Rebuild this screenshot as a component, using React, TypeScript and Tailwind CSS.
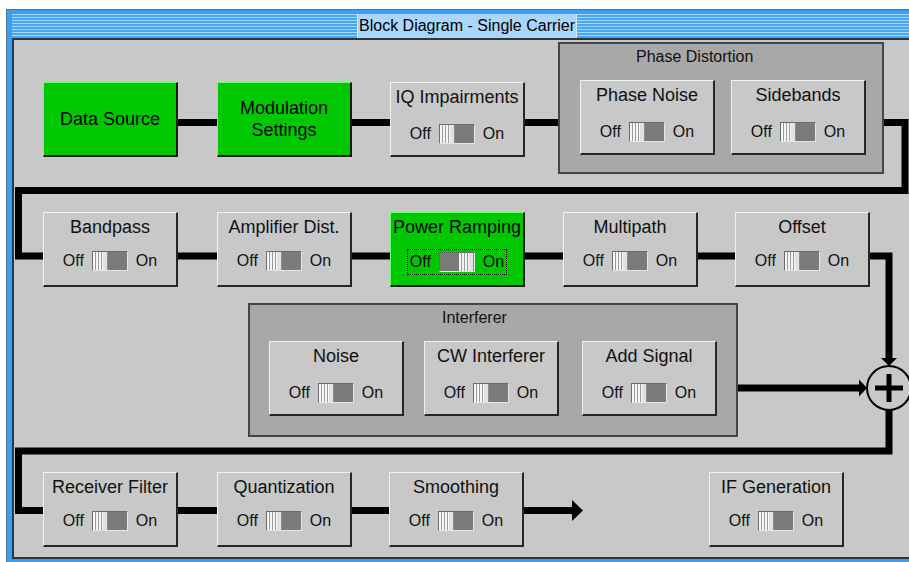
import type { ReactNode } from "react";

const FONT = "font-['Liberation_Sans',Arial,sans-serif]";

function Toggle({ on = false }: { on?: boolean }) {
  const thumb = (
    <div className="flex h-full w-[15px] border-r border-r-[#8c8c8c] bg-[#e2e2e2]">
      <div className="h-full w-[10px] bg-[repeating-linear-gradient(90deg,#f6f6f6_0_2px,#9c9c9c_2px_3px)]" />
    </div>
  );
  return (
    <div className="flex h-[20px] w-[36px] border border-t-[#6c6c6c] border-l-[#6c6c6c] border-b-[#e6e6e6] border-r-[#e6e6e6] bg-[#7b7b7b]">
      {on ? (
        <>
          <div className="flex-1" />
          {thumb}
        </>
      ) : (
        <>
          {thumb}
          <div className="flex-1" />
        </>
      )}
    </div>
  );
}

function Block({
  label,
  className = "",
  green = false,
  toggle = true,
  on = false,
  focus = false,
  low = false,
}: {
  label: ReactNode;
  className?: string;
  green?: boolean;
  toggle?: boolean;
  on?: boolean;
  focus?: boolean;
  low?: boolean;
}) {
  const skin = green
    ? "bg-[#00c800] border-t-[#6cff6c] border-l-[#6cff6c] border-b-[#1a1a1a] border-r-[#1a1a1a] text-black"
    : "bg-[#c8c8c8] border-t-[#f2f2f2] border-l-[#f2f2f2] border-b-[#262626] border-r-[#262626] text-[#111]";

  if (!toggle) {
    return (
      <div
        className={`relative z-10 flex h-[75px] w-[135px] shrink-0 items-center justify-center border-t border-l border-b-2 border-r-2 text-center text-[18px] leading-[22px] ${skin} ${className}`}
      >
        {label}
      </div>
    );
  }

  let rowGap = low ? "mt-[16px]" : "mt-[13px]";
  if (focus) rowGap = "mt-[11px] border border-dotted border-black px-[2px] py-[2px]";

  return (
    <div
      className={`relative z-10 flex h-[75px] w-[135px] shrink-0 flex-col items-center border-t border-l border-b-2 border-r-2 ${skin} ${className}`}
    >
      <div className="whitespace-nowrap pt-[3px] text-[18px] leading-[22px]">{label}</div>
      <div className={`flex items-center gap-2 text-[16px] leading-[20px] ${rowGap}`}>
        <span>Off</span>
        <Toggle on={on} />
        <span>On</span>
      </div>
    </div>
  );
}

function Panel({
  title,
  titleClass,
  className = "",
  children,
}: {
  title: string;
  titleClass: string;
  className?: string;
  children: ReactNode;
}) {
  return (
    <div
      className={`relative z-10 flex shrink-0 flex-col border-2 border-[#454545] bg-[#a8a8a8] ${className}`}
    >
      <div className={`h-[36px] pt-[3px] text-[16px] leading-[20px] text-[#111] ${titleClass}`}>
        {title}
      </div>
      <div className="flex items-start">{children}</div>
    </div>
  );
}

function Wires() {
  return (
    <svg
      className="absolute left-0 top-0 z-0"
      width="900"
      height="517"
      viewBox="0 0 900 517"
    >
      <g fill="none" stroke="#000" strokeWidth="7" strokeLinejoin="miter">
        <path d="M100 82.5 H891 V150.5 H4.5 V216 H875 V319" />
        <path d="M724 348 H846" />
        <path d="M875 370 V411 H4.5 V470.5 H560" />
      </g>
      <polygon points="867,318 883,318 875,326" fill="#000" />
      <polygon points="845,339.5 845,356.5 853,348" fill="#000" />
      <polygon points="558,460 558,481 569,470.5" fill="#000" />
      <circle cx="875" cy="348" r="22" fill="#c8c8c8" stroke="#000" strokeWidth="2" />
      <path d="M861 348 H889 M875 334 V362" stroke="#000" strokeWidth="5" />
    </svg>
  );
}

export default function App() {
  return (
    <div className={`h-[562px] w-[909px] overflow-hidden bg-white ${FONT}`}>
      <div className="ml-[6px] mt-[9px] w-[960px] border-l border-t border-[#4f7493] bg-[#3c9ef0] pl-[5px] pt-[4px] pb-[6px]">
        {/* title bar */}
        <div className="flex h-[24px] bg-[repeating-linear-gradient(180deg,#a4d8fc_0_1px,#4aa6f2_1px_3px)] pl-[345px]">
          <div className="h-full whitespace-nowrap border-x border-[#d8eefe] bg-[#a9d6fa] px-[1px] text-[16px] leading-[24px] text-black">
            Block Diagram - Single Carrier
          </div>
        </div>

        {/* diagram canvas */}
        <div className="relative h-[521px] w-[902px] border-l-2 border-t-2 border-b-2 border-[#2a3642] bg-[#c8c8c8]">
          <Wires />

          <div className="relative flex flex-col">
            {/* row 1 */}
            <div className="flex items-start pt-[2px]">
              <Block green toggle={false} label="Data Source" className="ml-[29px] mt-[40px]" />
              <Block
                green
                toggle={false}
                label={
                  <span>
                    Modulation
                    <br />
                    Settings
                  </span>
                }
                className="ml-[39px] mt-[40px]"
              />
              <Block low label="IQ Impairments" className="ml-[38px] mt-[40px]" />
              <Panel title="Phase Distortion" titleClass="pl-[76px]" className="ml-[33px] h-[132px] w-[326px]">
                <Block low label="Phase Noise" className="ml-[20px]" />
                <Block low label="Sidebands" className="ml-[16px]" />
              </Panel>
            </div>

            {/* row 2 */}
            <div className="mt-[38px] flex items-start">
              <Block label="Bandpass" className="ml-[29px]" />
              <Block label="Amplifier Dist." className="ml-[39px]" />
              <Block green on focus label="Power Ramping" className="ml-[38px]" />
              <Block label="Multipath" className="ml-[38px]" />
              <Block label="Offset" className="ml-[37px]" />
            </div>

            {/* interferer */}
            <div className="mt-[16px] flex">
              <Panel title="Interferer" titleClass="pl-[192px]" className="ml-[234px] h-[134px] w-[490px]">
                <Block low label="Noise" className="ml-[19px]" />
                <Block low label="CW Interferer" className="ml-[20px]" />
                <Block low label="Add Signal" className="ml-[23px]" />
              </Panel>
            </div>

            {/* row 4 */}
            <div className="mt-[35px] flex items-start">
              <Block label="Receiver Filter" className="ml-[29px]" />
              <Block label="Quantization" className="ml-[39px]" />
              <Block label="Smoothing" className="ml-[37px]" />
              <Block label="IF Generation" className="ml-[185px]" />
            </div>
          </div>
        </div>
      </div>
    </div>
  );
}
